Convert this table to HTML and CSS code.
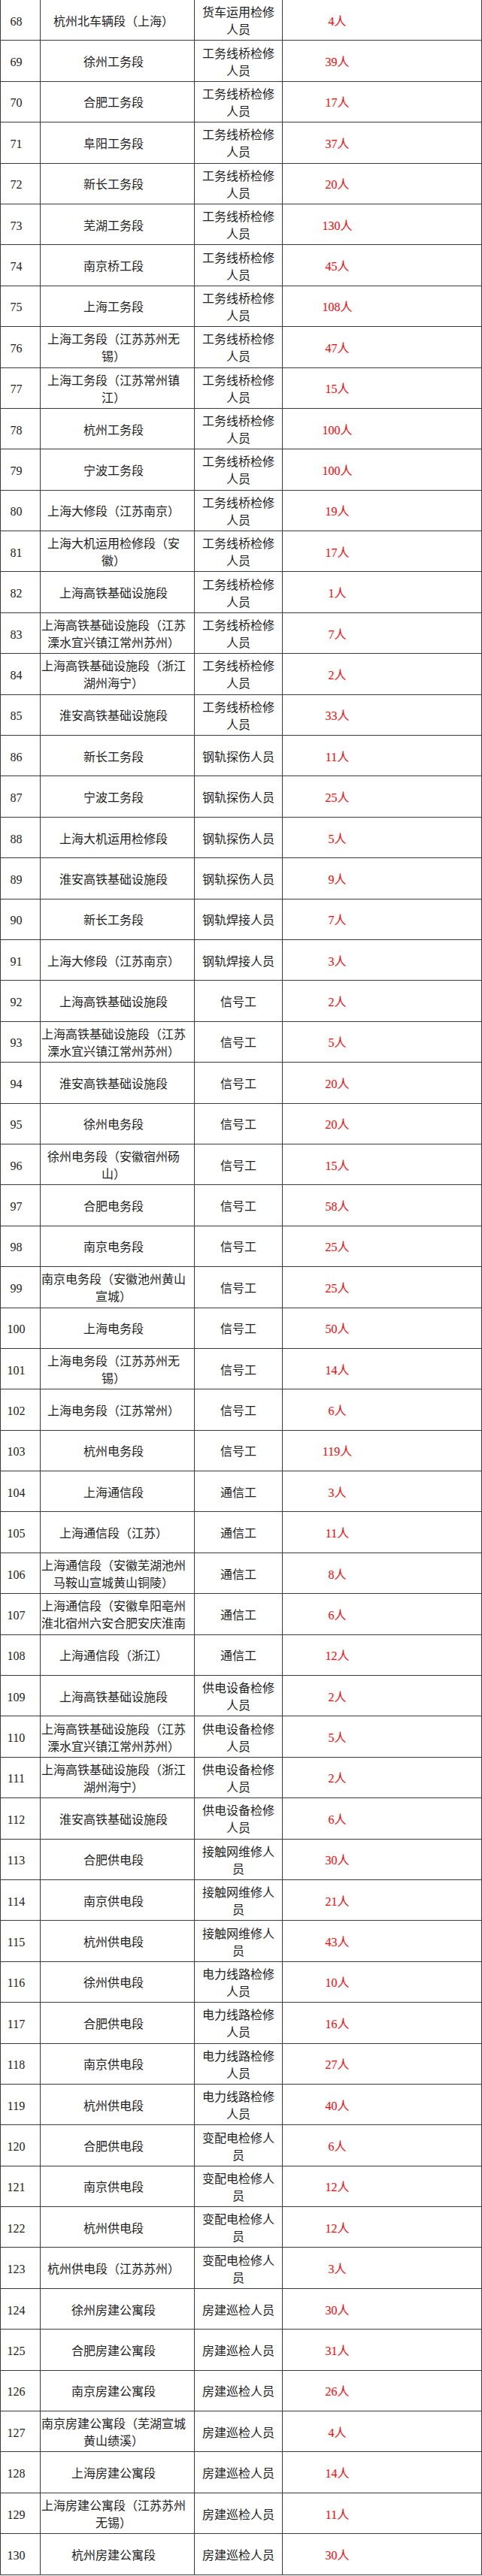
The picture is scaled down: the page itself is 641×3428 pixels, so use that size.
FILE: index.html
```html
<!DOCTYPE html>
<html lang="zh-CN">
<head>
<meta charset="utf-8">
<title>招聘岗位表</title>
<link rel="stylesheet" href="styles.css">
</head>
<body>
<table class="jobs">
<colgroup><col class="c-no"><col class="c-unit"><col class="c-post"><col class="c-num"></colgroup>
<tbody>
<tr><td class="no">68</td><td class="unit">杭州北车辆段（上海）</td><td class="post">货车运用检修人员</td><td class="num">4人</td></tr>
<tr><td class="no">69</td><td class="unit">徐州工务段</td><td class="post">工务线桥检修人员</td><td class="num">39人</td></tr>
<tr><td class="no">70</td><td class="unit">合肥工务段</td><td class="post">工务线桥检修人员</td><td class="num">17人</td></tr>
<tr><td class="no">71</td><td class="unit">阜阳工务段</td><td class="post">工务线桥检修人员</td><td class="num">37人</td></tr>
<tr><td class="no">72</td><td class="unit">新长工务段</td><td class="post">工务线桥检修人员</td><td class="num">20人</td></tr>
<tr><td class="no">73</td><td class="unit">芜湖工务段</td><td class="post">工务线桥检修人员</td><td class="num">130人</td></tr>
<tr><td class="no">74</td><td class="unit">南京桥工段</td><td class="post">工务线桥检修人员</td><td class="num">45人</td></tr>
<tr><td class="no">75</td><td class="unit">上海工务段</td><td class="post">工务线桥检修人员</td><td class="num">108人</td></tr>
<tr><td class="no">76</td><td class="unit">上海工务段（江苏苏州无锡）</td><td class="post">工务线桥检修人员</td><td class="num">47人</td></tr>
<tr><td class="no">77</td><td class="unit">上海工务段（江苏常州镇江）</td><td class="post">工务线桥检修人员</td><td class="num">15人</td></tr>
<tr><td class="no">78</td><td class="unit">杭州工务段</td><td class="post">工务线桥检修人员</td><td class="num">100人</td></tr>
<tr><td class="no">79</td><td class="unit">宁波工务段</td><td class="post">工务线桥检修人员</td><td class="num">100人</td></tr>
<tr><td class="no">80</td><td class="unit">上海大修段（江苏南京）</td><td class="post">工务线桥检修人员</td><td class="num">19人</td></tr>
<tr><td class="no">81</td><td class="unit">上海大机运用检修段（安徽）</td><td class="post">工务线桥检修人员</td><td class="num">17人</td></tr>
<tr><td class="no">82</td><td class="unit">上海高铁基础设施段</td><td class="post">工务线桥检修人员</td><td class="num">1人</td></tr>
<tr><td class="no">83</td><td class="unit">上海高铁基础设施段（江苏溧水宜兴镇江常州苏州）</td><td class="post">工务线桥检修人员</td><td class="num">7人</td></tr>
<tr><td class="no">84</td><td class="unit">上海高铁基础设施段（浙江湖州海宁）</td><td class="post">工务线桥检修人员</td><td class="num">2人</td></tr>
<tr><td class="no">85</td><td class="unit">淮安高铁基础设施段</td><td class="post">工务线桥检修人员</td><td class="num">33人</td></tr>
<tr><td class="no">86</td><td class="unit">新长工务段</td><td class="post">钢轨探伤人员</td><td class="num">11人</td></tr>
<tr><td class="no">87</td><td class="unit">宁波工务段</td><td class="post">钢轨探伤人员</td><td class="num">25人</td></tr>
<tr><td class="no">88</td><td class="unit">上海大机运用检修段</td><td class="post">钢轨探伤人员</td><td class="num">5人</td></tr>
<tr><td class="no">89</td><td class="unit">淮安高铁基础设施段</td><td class="post">钢轨探伤人员</td><td class="num">9人</td></tr>
<tr><td class="no">90</td><td class="unit">新长工务段</td><td class="post">钢轨焊接人员</td><td class="num">7人</td></tr>
<tr><td class="no">91</td><td class="unit">上海大修段（江苏南京）</td><td class="post">钢轨焊接人员</td><td class="num">3人</td></tr>
<tr><td class="no">92</td><td class="unit">上海高铁基础设施段</td><td class="post">信号工</td><td class="num">2人</td></tr>
<tr><td class="no">93</td><td class="unit">上海高铁基础设施段（江苏溧水宜兴镇江常州苏州）</td><td class="post">信号工</td><td class="num">5人</td></tr>
<tr><td class="no">94</td><td class="unit">淮安高铁基础设施段</td><td class="post">信号工</td><td class="num">20人</td></tr>
<tr><td class="no">95</td><td class="unit">徐州电务段</td><td class="post">信号工</td><td class="num">20人</td></tr>
<tr><td class="no">96</td><td class="unit">徐州电务段（安徽宿州砀山）</td><td class="post">信号工</td><td class="num">15人</td></tr>
<tr><td class="no">97</td><td class="unit">合肥电务段</td><td class="post">信号工</td><td class="num">58人</td></tr>
<tr><td class="no">98</td><td class="unit">南京电务段</td><td class="post">信号工</td><td class="num">25人</td></tr>
<tr><td class="no">99</td><td class="unit">南京电务段（安徽池州黄山宣城）</td><td class="post">信号工</td><td class="num">25人</td></tr>
<tr><td class="no">100</td><td class="unit">上海电务段</td><td class="post">信号工</td><td class="num">50人</td></tr>
<tr><td class="no">101</td><td class="unit">上海电务段（江苏苏州无锡）</td><td class="post">信号工</td><td class="num">14人</td></tr>
<tr><td class="no">102</td><td class="unit">上海电务段（江苏常州）</td><td class="post">信号工</td><td class="num">6人</td></tr>
<tr><td class="no">103</td><td class="unit">杭州电务段</td><td class="post">信号工</td><td class="num">119人</td></tr>
<tr><td class="no">104</td><td class="unit">上海通信段</td><td class="post">通信工</td><td class="num">3人</td></tr>
<tr><td class="no">105</td><td class="unit">上海通信段（江苏）</td><td class="post">通信工</td><td class="num">11人</td></tr>
<tr><td class="no">106</td><td class="unit">上海通信段（安徽芜湖池州马鞍山宣城黄山铜陵）</td><td class="post">通信工</td><td class="num">8人</td></tr>
<tr><td class="no">107</td><td class="unit">上海通信段（安徽阜阳亳州淮北宿州六安合肥安庆淮南</td><td class="post">通信工</td><td class="num">6人</td></tr>
<tr><td class="no">108</td><td class="unit">上海通信段（浙江）</td><td class="post">通信工</td><td class="num">12人</td></tr>
<tr><td class="no">109</td><td class="unit">上海高铁基础设施段</td><td class="post">供电设备检修人员</td><td class="num">2人</td></tr>
<tr><td class="no">110</td><td class="unit">上海高铁基础设施段（江苏溧水宜兴镇江常州苏州）</td><td class="post">供电设备检修人员</td><td class="num">5人</td></tr>
<tr><td class="no">111</td><td class="unit">上海高铁基础设施段（浙江湖州海宁）</td><td class="post">供电设备检修人员</td><td class="num">2人</td></tr>
<tr><td class="no">112</td><td class="unit">淮安高铁基础设施段</td><td class="post">供电设备检修人员</td><td class="num">6人</td></tr>
<tr><td class="no">113</td><td class="unit">合肥供电段</td><td class="post">接触网维修人员</td><td class="num">30人</td></tr>
<tr><td class="no">114</td><td class="unit">南京供电段</td><td class="post">接触网维修人员</td><td class="num">21人</td></tr>
<tr><td class="no">115</td><td class="unit">杭州供电段</td><td class="post">接触网维修人员</td><td class="num">43人</td></tr>
<tr><td class="no">116</td><td class="unit">徐州供电段</td><td class="post">电力线路检修人员</td><td class="num">10人</td></tr>
<tr><td class="no">117</td><td class="unit">合肥供电段</td><td class="post">电力线路检修人员</td><td class="num">16人</td></tr>
<tr><td class="no">118</td><td class="unit">南京供电段</td><td class="post">电力线路检修人员</td><td class="num">27人</td></tr>
<tr><td class="no">119</td><td class="unit">杭州供电段</td><td class="post">电力线路检修人员</td><td class="num">40人</td></tr>
<tr><td class="no">120</td><td class="unit">合肥供电段</td><td class="post">变配电检修人员</td><td class="num">6人</td></tr>
<tr><td class="no">121</td><td class="unit">南京供电段</td><td class="post">变配电检修人员</td><td class="num">12人</td></tr>
<tr><td class="no">122</td><td class="unit">杭州供电段</td><td class="post">变配电检修人员</td><td class="num">12人</td></tr>
<tr><td class="no">123</td><td class="unit">杭州供电段（江苏苏州）</td><td class="post">变配电检修人员</td><td class="num">3人</td></tr>
<tr><td class="no">124</td><td class="unit">徐州房建公寓段</td><td class="post">房建巡检人员</td><td class="num">30人</td></tr>
<tr><td class="no">125</td><td class="unit">合肥房建公寓段</td><td class="post">房建巡检人员</td><td class="num">31人</td></tr>
<tr><td class="no">126</td><td class="unit">南京房建公寓段</td><td class="post">房建巡检人员</td><td class="num">26人</td></tr>
<tr><td class="no">127</td><td class="unit">南京房建公寓段（芜湖宣城黄山绩溪）</td><td class="post">房建巡检人员</td><td class="num">4人</td></tr>
<tr><td class="no">128</td><td class="unit">上海房建公寓段</td><td class="post">房建巡检人员</td><td class="num">14人</td></tr>
<tr><td class="no">129</td><td class="unit">上海房建公寓段（江苏苏州无锡）</td><td class="post">房建巡检人员</td><td class="num">11人</td></tr>
<tr><td class="no">130</td><td class="unit">杭州房建公寓段</td><td class="post">房建巡检人员</td><td class="num">30人</td></tr>
</tbody>
</table>
</body>
</html>
```
FILE: styles.css
```css
html, body {
  margin: 0;
  padding: 0;
  background: #ffffff;
}

.jobs {
  width: 641px;
  table-layout: fixed;
  border-collapse: separate;
  border-spacing: 0;
  font-family: "Liberation Serif", "Noto Sans CJK SC", serif;
  font-size: 16px;
  line-height: 23px;
  color: #222222;
}

.c-no { width: 54px; }
.c-unit { width: 205px; }
.c-post { width: 117px; }
.c-num { width: 265px; }

.jobs tr {
  height: 54.4px;
}

.jobs td {
  box-sizing: border-box;
  border-right: 1px solid #3a3a3a;
  border-bottom: 1px solid #3a3a3a;
  text-align: center;
  vertical-align: middle;
  padding: 3px 0 0 0;
  word-break: break-all;
}

.jobs td.no {
  border-left: 1px solid #3a3a3a;
  padding-right: 11px;
}

.jobs td.unit {
  padding-left: 1px;
  padding-right: 11px;
}

.jobs td.post {
  padding-left: 5px;
  padding-right: 5px;
}

.jobs td.num {
  color: #ff0000;
  padding-right: 119px;
}
```
